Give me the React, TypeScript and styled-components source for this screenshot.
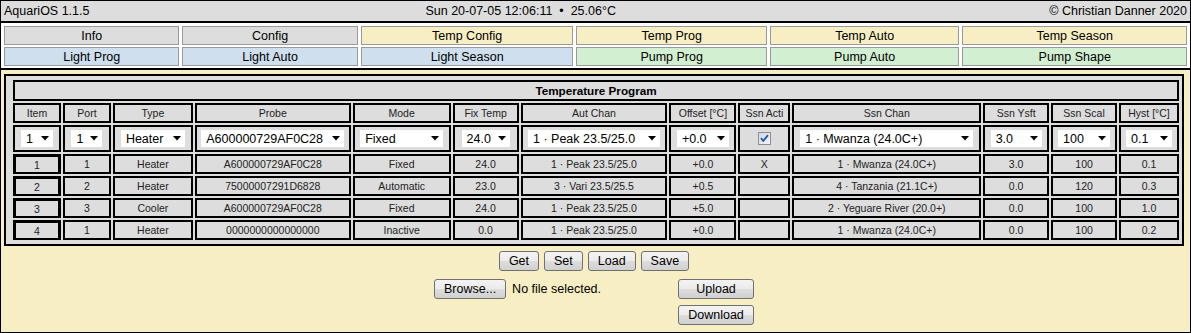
import styled, { createGlobalStyle } from "styled-components";

const GlobalStyle = createGlobalStyle`
  * { box-sizing: border-box; }
  body {
    margin: 0;
    font-family: "Liberation Sans", Arial, sans-serif;
    font-size: 12.5px;
    color: #000;
  }
`;

const COLORS: Record<string, string> = {
  gray: "#dddddd",
  yellow: "#f7efc3",
  blue: "#cfdfee",
  green: "#d2efd2",
};

const NAV = [
  { label: "Info", tone: "gray" },
  { label: "Config", tone: "gray" },
  { label: "Temp Config", tone: "yellow" },
  { label: "Temp Prog", tone: "yellow" },
  { label: "Temp Auto", tone: "yellow" },
  { label: "Temp Season", tone: "yellow" },
  { label: "Light Prog", tone: "blue" },
  { label: "Light Auto", tone: "blue" },
  { label: "Light Season", tone: "blue" },
  { label: "Pump Prog", tone: "green" },
  { label: "Pump Auto", tone: "green" },
  { label: "Pump Shape", tone: "green" },
];

const COLS = [48, 48, 80, 156, 98, 66, 147, 67, 52, 189, 66, 66, 60];

const HEADERS = [
  "Item", "Port", "Type", "Probe", "Mode", "Fix Temp", "Aut Chan",
  "Offset [°C]", "Ssn Acti", "Ssn Chan", "Ssn Ysft", "Ssn Scal", "Hyst [°C]",
];

// select row: [text, width] ; null = checkbox
const SELECTS: ([string, number] | null)[] = [
  ["1", 32], ["1", 31], ["Heater", 64], ["A600000729AF0C28", 143], ["Fixed", 83],
  ["24.0", 48], ["1 · Peak 23.5/25.0", 132], ["+0.0", 52], null,
  ["1 · Mwanza (24.0C+)", 173], ["3.0", 51], ["100", 52], ["0.1", 46],
];

const ROWS = [
  ["1", "1", "Heater", "A600000729AF0C28", "Fixed", "24.0", "1 · Peak 23.5/25.0", "+0.0", "X", "1 · Mwanza (24.0C+)", "3.0", "100", "0.1"],
  ["2", "2", "Heater", "75000007291D6828", "Automatic", "23.0", "3 · Vari 23.5/25.5", "+0.5", "", "4 · Tanzania (21.1C+)", "0.0", "120", "0.3"],
  ["3", "3", "Cooler", "A600000729AF0C28", "Fixed", "24.0", "1 · Peak 23.5/25.0", "+5.0", "", "2 · Yeguare River (20.0+)", "0.0", "100", "1.0"],
  ["4", "1", "Heater", "0000000000000000", "Inactive", "0.0", "1 · Peak 23.5/25.0", "+0.0", "", "1 · Mwanza (24.0C+)", "0.0", "100", "0.2"],
];

function Arrow() {
  return (
    <svg width="8" height="5" viewBox="0 0 8 5">
      <polygon points="0,0 8,0 4,4.5" fill="#000" />
    </svg>
  );
}

function CheckBox() {
  return (
    <svg width="13" height="13" viewBox="0 0 13 13">
      <defs>
        <linearGradient id="cbg" x1="0" y1="0" x2="1" y2="1">
          <stop offset="0" stopColor="#cfd7e2" />
          <stop offset="1" stopColor="#f4f6f9" />
        </linearGradient>
      </defs>
      <rect x="0.5" y="0.5" width="12" height="12" fill="url(#cbg)" stroke="#8e8f8f" />
      <path d="M3 6.2 L5.3 8.8 L10 3.2" fill="none" stroke="#2a53a3" strokeWidth="1.8" />
    </svg>
  );
}

export default function App() {
  return (
    <>
      <GlobalStyle />
      <Page>
        <TopBar>
          <span>AquariOS 1.1.5</span>
          <Center>Sun 20-07-05 12:06:11&nbsp;&nbsp;•&nbsp;&nbsp;25.06°C</Center>
          <Right>© Christian Danner 2020</Right>
        </TopBar>
        <Nav>
          {NAV.map((n) => (
            <NavCell key={n.label} $bg={COLORS[n.tone]}>{n.label}</NavCell>
          ))}
        </Nav>
        <Content>
          <ProgramBox>
            <ProgramGrid>
              <TitleCell>Temperature Program</TitleCell>
              {HEADERS.map((h) => (
                <HeadCell key={h}>{h}</HeadCell>
              ))}
              {SELECTS.map((s, i) => (
                <SelectCell key={i}>
                  {s ? (
                    <SelectBox $w={s[1]}>
                      <span>{s[0]}</span>
                      <Arrow />
                    </SelectBox>
                  ) : (
                    <CheckBox />
                  )}
                </SelectCell>
              ))}
              {ROWS.map((row, r) =>
                row.map((v, c) => (
                  <DataCell key={`${r}-${c}`} $item={c === 0}>{v}</DataCell>
                ))
              )}
            </ProgramGrid>
          </ProgramBox>
          <ButtonRow>
            <Button>Get</Button>
            <Button>Set</Button>
            <Button>Load</Button>
            <Button>Save</Button>
          </ButtonRow>
          <FileGrid>
            <FileInput>
              <Button>Browse...</Button>
              <span>No file selected.</span>
            </FileInput>
            <Button $w={76}>Upload</Button>
            <span />
            <Button $w={76}>Download</Button>
          </FileGrid>
        </Content>
      </Page>
    </>
  );
}

const Page = styled.div`
  width: 1191px;
  height: 333px;
  border: 1px solid #000;
  display: flex;
  flex-direction: column;
  overflow: hidden;
`;

const TopBar = styled.div`
  display: grid;
  grid-template-columns: 88fr 197fr 142fr;
  align-items: center;
  height: 22px;
  padding: 0 3px;
  background: #dddddd;
  border-bottom: 2px solid #000;
  white-space: nowrap;
`;

const Center = styled.span`
  text-align: center;
`;

const Right = styled.span`
  text-align: right;
`;

const Nav = styled.div`
  display: grid;
  grid-template-columns: 175fr 175fr 212fr 190fr 189fr 224fr;
  grid-auto-rows: 19px;
  gap: 2px 3px;
  padding: 3px 3px 2px;
  background: #fff;
  border-bottom: 2px solid #000;
`;

const NavCell = styled.div<{ $bg: string }>`
  background: ${(p) => p.$bg};
  border: 1px solid #9a9a9a;
  display: flex;
  align-items: center;
  justify-content: center;
`;

const Content = styled.div`
  flex: 1;
  background: #f7efc3;
  padding: 4px 6px 0 3px;
  display: flex;
  flex-direction: column;
`;

const ProgramBox = styled.div`
  border: 2px solid #000;
  background: #dddddd;
  padding: 4px 3px 4px 7px;
`;

const ProgramGrid = styled.div`
  display: grid;
  grid-template-columns: ${COLS.map((c) => `${c}fr`).join(" ")};
  grid-template-rows: 21px 20px 27px repeat(4, 20px);
  gap: 2px;
`;

const Cell = styled.div`
  border: 2px solid #000;
  background: #dddddd;
  display: flex;
  align-items: center;
  justify-content: center;
  min-width: 0;
  white-space: nowrap;
  overflow: hidden;
`;

const TitleCell = styled(Cell)`
  grid-column: 1 / -1;
  font-weight: bold;
  font-size: 11.7px;
`;

const HeadCell = styled(Cell)`
  font-size: 10.5px;
  color: #222;
`;

const SelectCell = styled(Cell)``;

const DataCell = styled(Cell)<{ $item?: boolean }>`
  font-size: 10.5px;
  color: #222;
  ${(p) => p.$item && `border-width: 3px 3px 2px 3px;`}
`;

const SelectBox = styled.div<{ $w: number }>`
  width: ${(p) => p.$w}px;
  height: 17px;
  background: #fff;
  display: flex;
  align-items: center;
  justify-content: space-between;
  padding: 0 4px 0 5px;
  font-size: 12.5px;
  color: #000;
  overflow: hidden;
`;

const ButtonRow = styled.div`
  display: flex;
  justify-content: center;
  gap: 5px;
  margin-top: 5px;
`;

const Button = styled.button<{ $w?: number }>`
  height: 20px;
  padding: 0 9px;
  border: 1px solid #707070;
  border-radius: 3px;
  background: linear-gradient(#f3f3f3 0%, #ebebeb 50%, #dddddd 51%, #d0d0d0 100%);
  font: 12.5px "Liberation Sans", Arial, sans-serif;
  color: #000;
  ${(p) => (p.$w ? `width: ${p.$w}px;` : "")}
`;

const FileGrid = styled.div`
  display: grid;
  grid-template-columns: 236px 76px;
  column-gap: 8px;
  row-gap: 6px;
  justify-content: center;
  margin-top: 8px;
`;

const FileInput = styled.div`
  display: flex;
  align-items: center;
  gap: 6px;
`;
